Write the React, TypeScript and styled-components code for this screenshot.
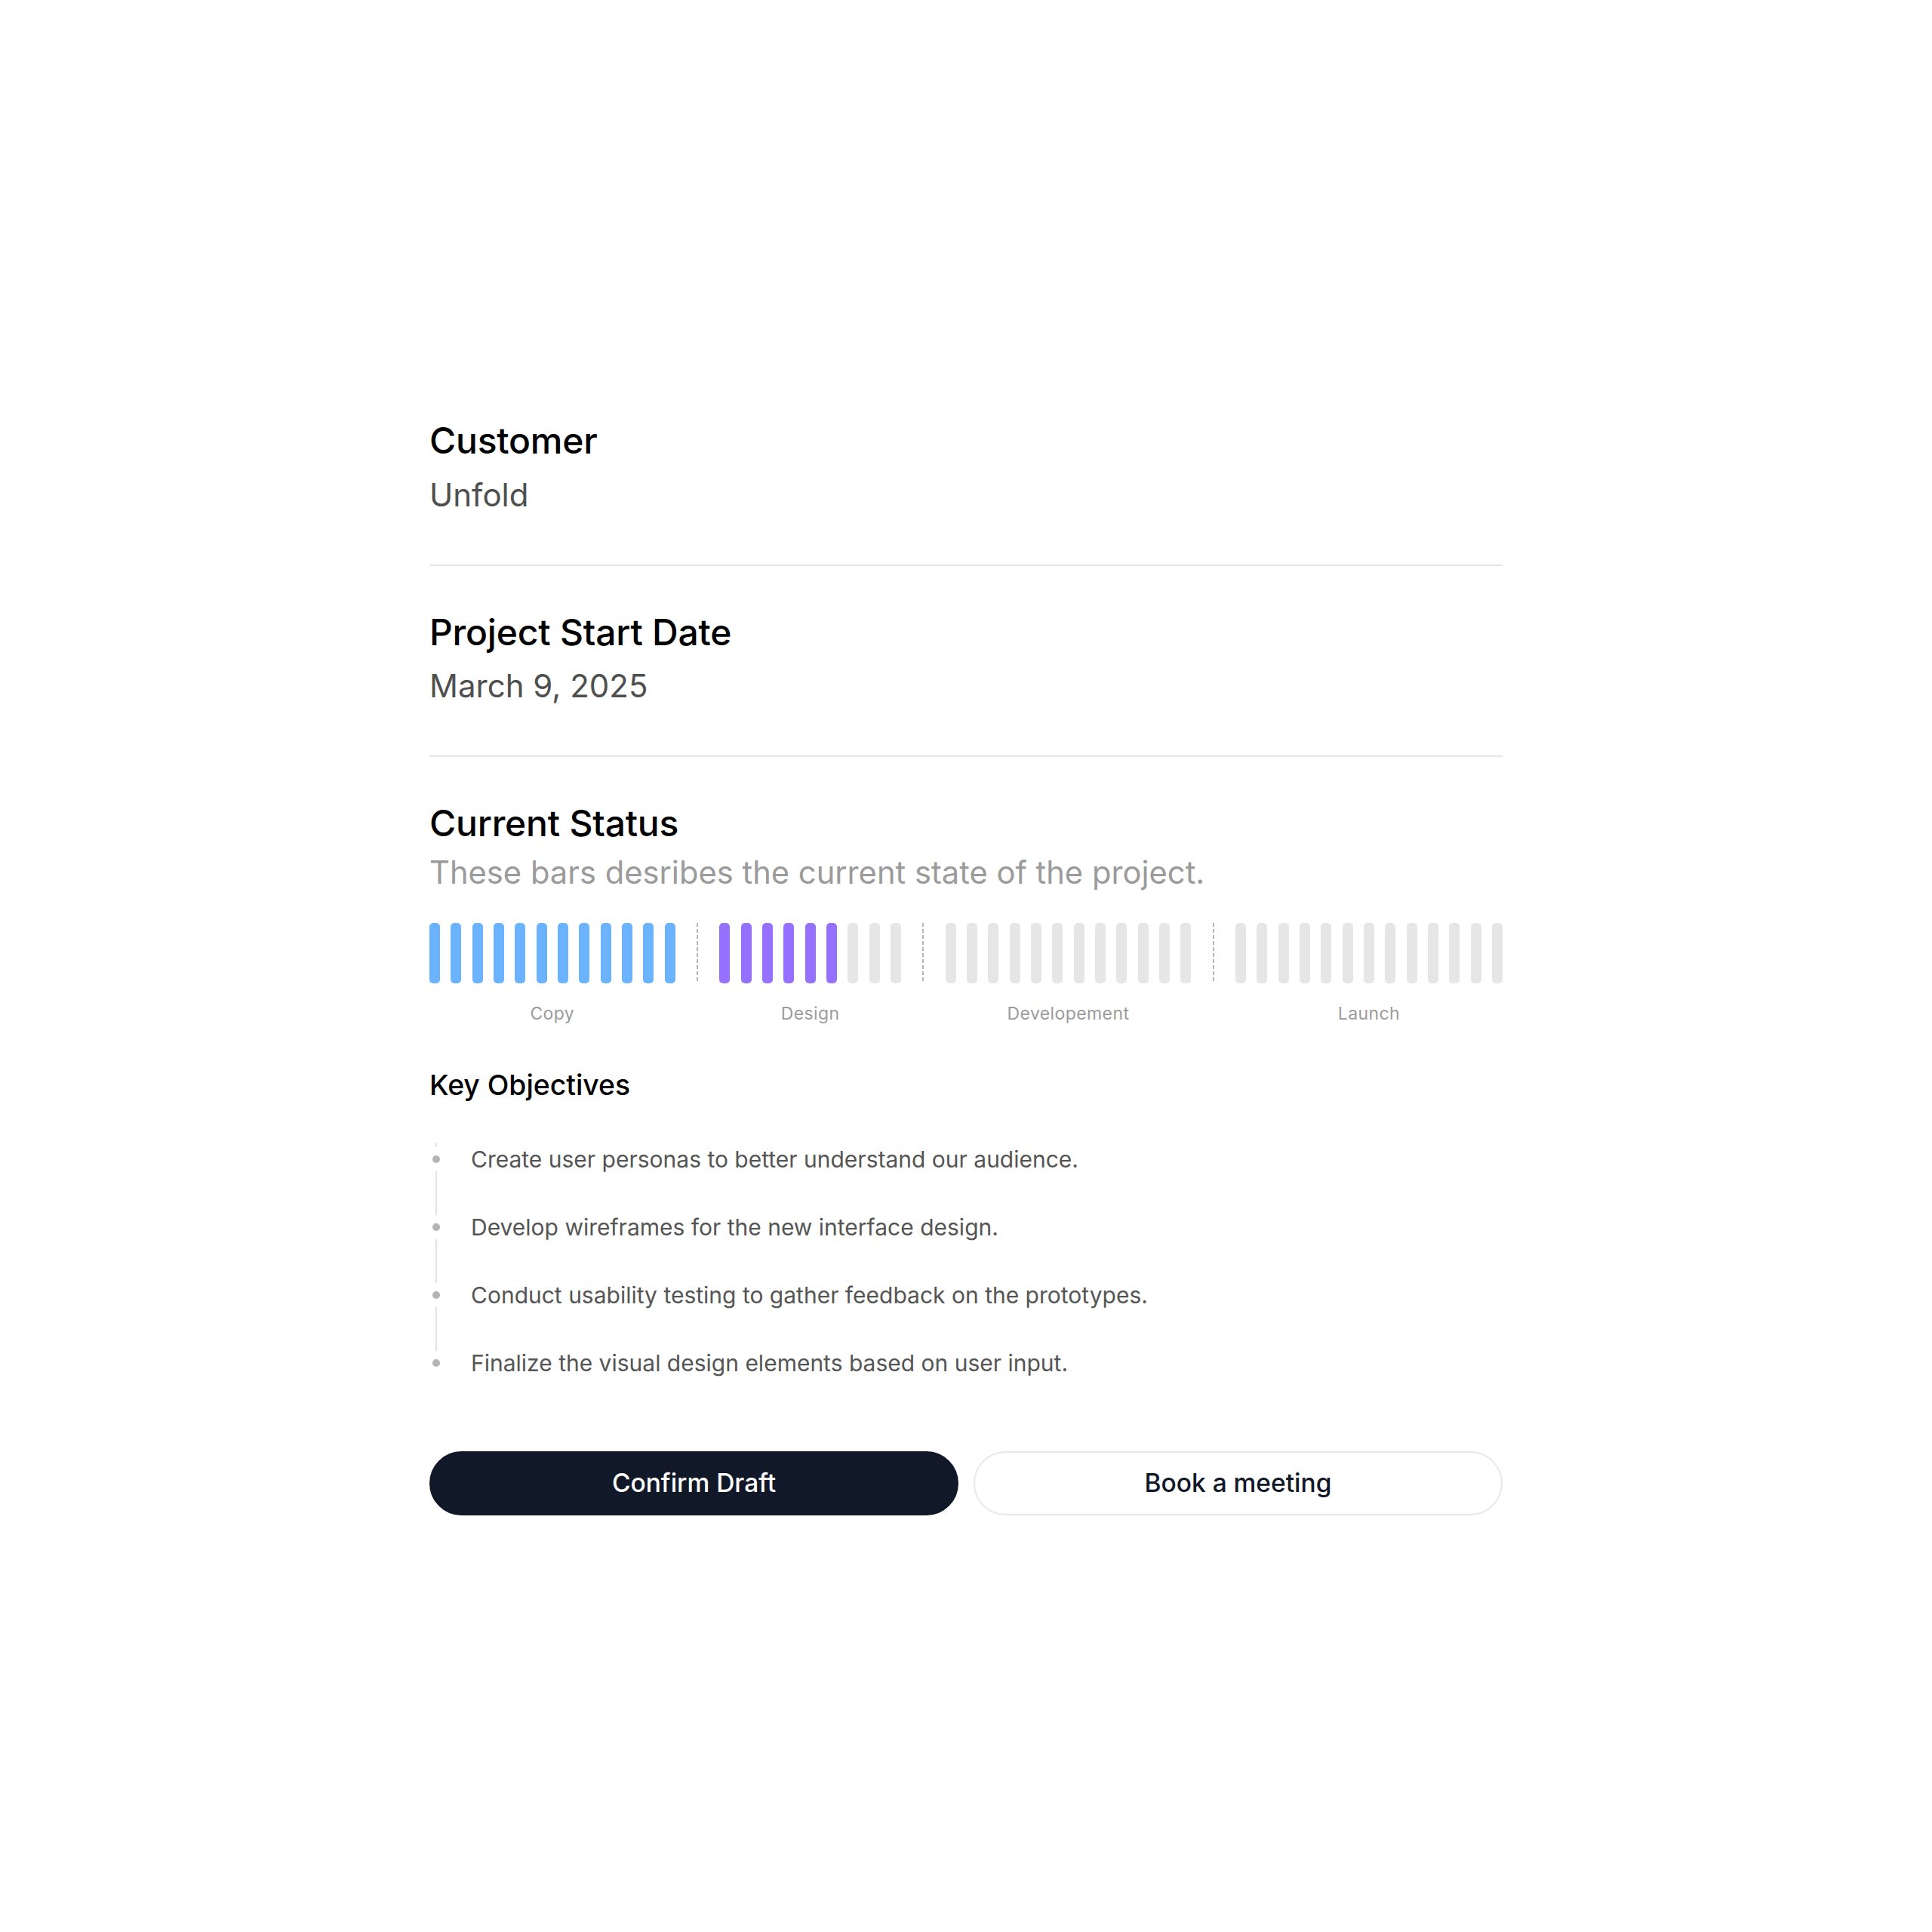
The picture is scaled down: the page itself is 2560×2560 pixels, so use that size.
import React from 'react';
import styled, { createGlobalStyle } from 'styled-components';

const GlobalStyle = createGlobalStyle`
  html, body {
    margin: 0;
    padding: 0;
    background: #ffffff;
  }
  body {
    font-family: Inter, "Noto Sans", "Liberation Sans", sans-serif;
    -webkit-font-smoothing: antialiased;
  }
  * {
    box-sizing: border-box;
  }
`;

const Page = styled.main`
  min-height: 100vh;
  display: flex;
  align-items: center;
  justify-content: center;
`;

const Card = styled.div`
  width: 1422px;
  padding-top: 3px;
  display: flex;
  flex-direction: column;
`;

const Section = styled.section<{ $divider?: boolean; $first?: boolean }>`
  display: flex;
  flex-direction: column;
  padding-top: ${({ $first }) => ($first ? '0' : '59px')};
  padding-bottom: ${({ $divider }) => ($divider ? '62px' : '0')};
  border-bottom: ${({ $divider }) => ($divider ? '2px solid #e6e6e6' : 'none')};
`;

const Heading = styled.h2`
  margin: 0;
  font-size: 48px;
  line-height: 57.6px;
  font-weight: 500;
  color: #000000;
  letter-spacing: -0.2px;
`;

const Value = styled.p<{ $muted?: boolean; $tight?: boolean }>`
  margin: ${({ $tight }) => ($tight ? '7px' : '14px')} 0 0;
  font-size: ${({ $muted }) => ($muted ? '41.7px' : '42px')};
  line-height: 58.8px;
  font-weight: 400;
  color: ${({ $muted }) => ($muted ? '#9b9b9b' : '#4f4f4f')};
`;

// Progress track: segments of bars split by dashed lines
const Track = styled.div`
  margin-top: 37px;
  display: flex;
  align-items: flex-start;
  justify-content: space-between;
`;

const Segment = styled.div`
  display: flex;
  flex-direction: column;
  align-items: center;
`;

const BarRow = styled.div`
  display: flex;
  gap: 14.33px;
`;

const Bar = styled.span<{ $color: string }>`
  width: 14px;
  height: 80px;
  border-radius: 5px;
  background: ${({ $color }) => $color};
`;

const SegmentLabel = styled.span`
  margin-top: 24px;
  font-size: 23px;
  line-height: 33px;
  color: #9b9b9b;
  letter-spacing: 0.4px;
`;

const Separator = styled.span`
  width: 2px;
  height: 80px;
  background: repeating-linear-gradient(
    to bottom,
    #b5b5b5 0 5px,
    transparent 5px 8px
  );
`;

const SubHeading = styled.h3`
  margin: 55px 0 0;
  font-size: 37.3px;
  line-height: 46.8px;
  font-weight: 500;
  color: #000000;
`;

const Objectives = styled.ul`
  list-style: none;
  margin: 53px 0 0;
  padding: 0;
  display: flex;
  flex-direction: column;
`;

const Objective = styled.li`
  display: grid;
  grid-template-columns: 18px 1fr;
  column-gap: 37px;
`;

const Rail = styled.div`
  display: flex;
  flex-direction: column;
  align-items: center;
`;

const RailLine = styled.span<{ $grow?: boolean; $hidden?: boolean }>`
  width: 2px;
  height: ${({ $grow }) => ($grow ? 'auto' : '6px')};
  flex: ${({ $grow }) => ($grow ? '1' : 'none')};
  background: ${({ $hidden }) => ($hidden ? 'transparent' : '#e2e2e2')};
`;

const Dot = styled.span`
  width: 10px;
  height: 10px;
  margin: 11px 0;
  border-radius: 50%;
  background: #b4b4b4;
`;

const ObjectiveText = styled.span`
  font-size: 30px;
  line-height: 44px;
  color: #555555;
  padding-bottom: 45.8px;
`;

const Actions = styled.div`
  margin-top: 49px;
  display: grid;
  grid-template-columns: 1fr 1fr;
  gap: 20px;
`;

const Button = styled.button<{ $primary?: boolean }>`
  height: 85px;
  border-radius: 999px;
  font-family: inherit;
  font-size: 33.5px;
  font-weight: 500;
  cursor: pointer;
  background: ${({ $primary }) => ($primary ? '#111827' : '#ffffff')};
  color: ${({ $primary }) => ($primary ? '#ffffff' : '#111827')};
  border: 2px solid ${({ $primary }) => ($primary ? '#111827' : '#e8e8e8')};
`;

const stages = [
  { label: 'Copy', total: 12, done: 12, color: '#6cb3ff' },
  { label: 'Design', total: 9, done: 6, color: '#9670ff' },
  { label: 'Developement', total: 12, done: 0, color: '#e6e6e6' },
  { label: 'Launch', total: 13, done: 0, color: '#e6e6e6' },
];

const objectives = [
  'Create user personas to better understand our audience.',
  'Develop wireframes for the new interface design.',
  'Conduct usability testing to gather feedback on the prototypes.',
  'Finalize the visual design elements based on user input.',
];

const App: React.FC = () => {
  return (
    <>
      <GlobalStyle />
      <Page>
        <Card>
          <Section $first $divider>
            <Heading>Customer</Heading>
            <Value>Unfold</Value>
          </Section>

          <Section $divider>
            <Heading>Project Start Date</Heading>
            <Value>March 9, 2025</Value>
          </Section>

          <Section>
            <Heading>Current Status</Heading>
            <Value $muted $tight>These bars desribes the current state of the project.</Value>

            <Track>
              {stages.map((stage, i) => (
                <React.Fragment key={stage.label}>
                  {i > 0 && <Separator />}
                  <Segment>
                    <BarRow>
                      {Array.from({ length: stage.total }).map((_, b) => (
                        <Bar key={b} $color={b < stage.done ? stage.color : '#e6e6e6'} />
                      ))}
                    </BarRow>
                    <SegmentLabel>{stage.label}</SegmentLabel>
                  </Segment>
                </React.Fragment>
              ))}
            </Track>

            <SubHeading>Key Objectives</SubHeading>
            <Objectives>
              {objectives.map((text, i) => (
                <Objective key={text}>
                  <Rail>
                    <RailLine />
                    <Dot />
                    <RailLine $grow $hidden={i === objectives.length - 1} />
                  </Rail>
                  <ObjectiveText>{text}</ObjectiveText>
                </Objective>
              ))}
            </Objectives>
          </Section>

          <Actions>
            <Button $primary>Confirm Draft</Button>
            <Button>Book a meeting</Button>
          </Actions>
        </Card>
      </Page>
    </>
  );
};

export default App;
